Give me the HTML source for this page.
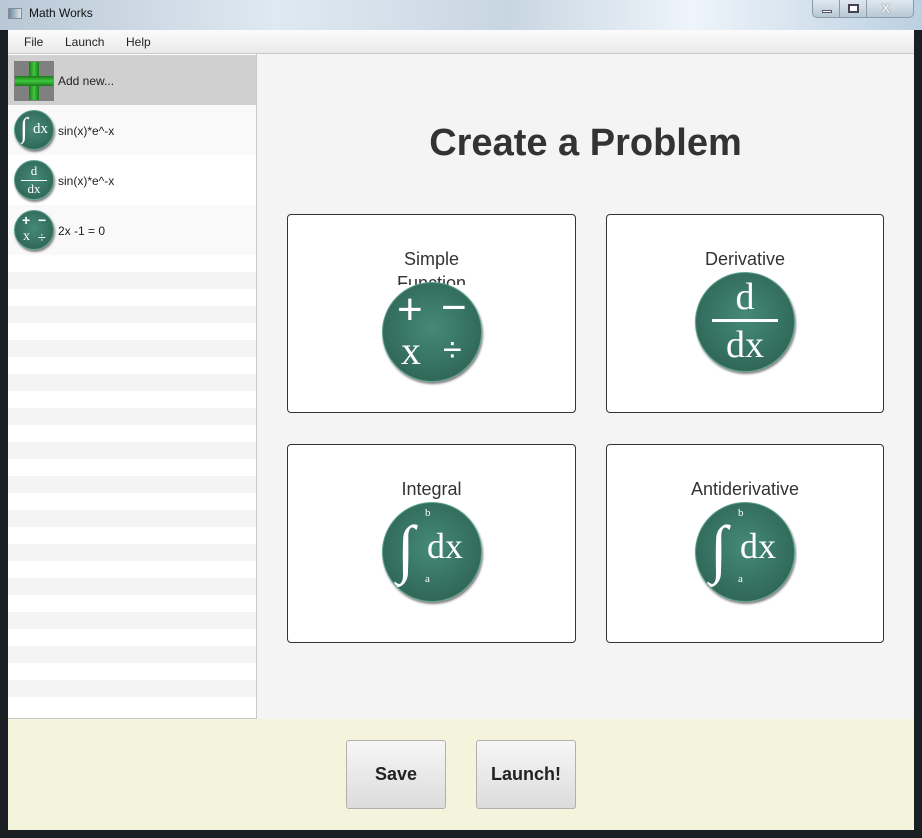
<!DOCTYPE html>
<html><head><meta charset="utf-8"><style>
*{margin:0;padding:0;box-sizing:border-box}
body{width:922px;height:838px;overflow:hidden;position:relative;background:#1a1f24;font-family:"Liberation Sans",sans-serif}
.abs{position:absolute}
#top{left:0;top:0;width:922px;height:30px;background:linear-gradient(90deg,#b9c8d6 0%,#dfe9f2 30%,#c8d6e2 55%,#eef4fa 75%,#bcd0e2 100%)}
#menu{left:8px;top:30px;width:906px;height:24px;background:linear-gradient(#fbfbfb,#e9e9e9);border-bottom:1px solid #c8c8c8;font-size:12px;color:#222}
#menu span{position:absolute;top:5px}
#list{left:8px;top:54px;width:249px;height:665px;background:#fff;border-right:1px solid #c8c8c8;border-bottom:1px solid #c8c8c8;overflow:hidden}
.row{position:absolute;left:0;width:248px;height:50px;font-size:12px;color:#222}
.row span{position:absolute;left:50px;top:19px}
.stripe{position:absolute;left:0;width:248px;height:17px;background:#f4f4f4}
#main{left:257px;top:54px;width:657px;height:665px;background:#f4f4f4}
#bot{left:8px;top:719px;width:906px;height:111px;background:#f4f4dc}
.card{position:absolute;background:#fff;border:1px solid #333;border-radius:4px}
.card .t{position:absolute;left:0;right:0;top:34px;text-align:center;font-size:18px;color:#333}
.c{position:absolute;border-radius:50%;background:radial-gradient(circle at 50% 45%,#458a76 0%,#346e5e 60%,#2a5a4c 100%);box-shadow:1px 2px 2px rgba(0,0,0,.5);border:1px solid #5aa08a;color:#fff;font-family:"Liberation Serif",serif;overflow:hidden}
.btn{position:absolute;top:740px;width:100px;height:69px;border:1px solid #b0b0b0;border-radius:3px;background:linear-gradient(#f6f6f6,#dcdcdc);font-weight:bold;font-size:18px;color:#222;text-align:center;line-height:67px}
</style></head><body>
<div class="abs" id="top"></div>
<div class="abs" style="left:8px;top:8px;width:14px;height:11px;background:linear-gradient(90deg,#6a8aa0,#e0e8ee);border:1px solid #889"></div>
<div class="abs" style="left:29px;top:6px;font-size:12px;color:#111">Math Works</div>
<div class="abs" style="left:812px;top:0;width:102px;height:18px;border:1px solid #8a9aa8;border-top:none;border-radius:0 0 5px 5px;background:linear-gradient(#dfe8f0,#b8c8d6)"></div>
<div class="abs" style="left:839px;top:0;width:1px;height:18px;background:#8a9aa8"></div>
<div class="abs" style="left:866px;top:0;width:1px;height:18px;background:#8a9aa8"></div>
<div class="abs" style="left:822px;top:10px;width:10px;height:3px;background:#fff;border:1px solid #556"></div>
<div class="abs" style="left:848px;top:4px;width:11px;height:9px;border:2px solid #445;background:#fff"></div>
<div class="abs" style="left:881px;top:0px;font-size:14px;font-weight:bold;color:#eee;text-shadow:0 0 1px #333">X</div>
<div class="abs" id="menu"><span style="left:16px">File</span><span style="left:57px">Launch</span><span style="left:118px">Help</span></div>
<div class="abs" id="list">
 <div class="row" style="top:1px;background:#d0d0d0"><div style="position:absolute;left:6px;top:6px;width:40px;height:40px;background:#808080"></div><div style="position:absolute;left:21px;top:7px;width:10px;height:38px;background:linear-gradient(90deg,#1a7a1a,#3ec83e,#1a7a1a)"></div><div style="position:absolute;left:7px;top:21px;width:38px;height:10px;background:linear-gradient(#1a7a1a,#3ec83e,#1a7a1a)"></div><span>Add new...</span></div>
 <div class="row" style="top:51px;background:#f9f9f9"><div class="c" style="left:6px;top:5px;width:40px;height:40px"><div style="position:absolute;left:5px;top:2px;font-size:28px">∫</div><div style="position:absolute;left:18px;top:10px;font-size:15px">dx</div></div><span>sin(x)*e^-x</span></div>
 <div class="row" style="top:101px;background:#fff"><div class="c" style="left:6px;top:5px;width:40px;height:40px"><div style="position:absolute;width:100%;text-align:center;top:2px;font-size:13px">d</div><div style="position:absolute;left:6px;right:6px;top:19px;height:1px;background:#fff"></div><div style="position:absolute;width:100%;text-align:center;top:20px;font-size:13px">dx</div></div><span>sin(x)*e^-x</span></div>
 <div class="row" style="top:151px;background:#f9f9f9"><div class="c" style="left:6px;top:5px;width:40px;height:40px;font-size:14px;font-family:'Liberation Sans',sans-serif"><div style="position:absolute;left:7px;top:1px;font-weight:bold">+</div><div style="position:absolute;left:23px;top:1px;font-weight:bold">−</div><div style="position:absolute;left:8px;top:18px;font-family:'Liberation Serif',serif">x</div><div style="position:absolute;left:23px;top:18px">÷</div></div><span>2x -1 = 0</span></div>
 <div class="stripe" style="top:218px"></div><div class="stripe" style="top:252px"></div><div class="stripe" style="top:286px"></div><div class="stripe" style="top:320px"></div><div class="stripe" style="top:354px"></div><div class="stripe" style="top:388px"></div><div class="stripe" style="top:422px"></div><div class="stripe" style="top:456px"></div><div class="stripe" style="top:490px"></div><div class="stripe" style="top:524px"></div><div class="stripe" style="top:558px"></div><div class="stripe" style="top:592px"></div><div class="stripe" style="top:626px"></div>
</div>
<div class="abs" id="main">
 <div style="position:absolute;left:0;right:0;top:68px;text-align:center;font-size:38px;font-weight:bold;color:#333;padding-left:0">Create a Problem</div>
 <div class="card" style="left:30px;top:160px;width:289px;height:199px"><div class="t">Simple</div><div class="t" style="top:58px;height:12px;overflow:hidden">Function</div>
  <div class="c" style="left:94px;top:67px;width:100px;height:100px;font-family:'Liberation Sans',sans-serif"><div style="position:absolute;left:14px;top:2px;font-size:44px">+</div><div style="position:absolute;left:58px;top:0px;font-size:44px">−</div><div style="position:absolute;left:18px;top:44px;font-size:40px;font-family:'Liberation Serif',serif">x</div><div style="position:absolute;left:60px;top:48px;font-size:34px">÷</div></div></div>
 <div class="card" style="left:349px;top:160px;width:278px;height:199px"><div class="t">Derivative</div>
  <div class="c" style="left:88px;top:57px;width:100px;height:100px"><div style="position:absolute;width:100%;text-align:center;top:2px;font-size:38px">d</div><div style="position:absolute;left:16px;right:16px;top:46px;height:3px;background:#fff"></div><div style="position:absolute;width:100%;text-align:center;top:50px;font-size:38px">dx</div></div></div>
 <div class="card" style="left:30px;top:390px;width:289px;height:199px"><div class="t">Integral</div>
  <div class="c" style="left:94px;top:57px;width:100px;height:100px"><div style="position:absolute;left:14px;top:6px;font-size:64px;line-height:80px">∫</div><div style="position:absolute;left:44px;top:22px;font-size:36px">dx</div><div style="position:absolute;left:42px;top:4px;font-size:11px">b</div><div style="position:absolute;left:42px;top:70px;font-size:11px">a</div></div></div>
 <div class="card" style="left:349px;top:390px;width:278px;height:199px"><div class="t">Antiderivative</div>
  <div class="c" style="left:88px;top:57px;width:100px;height:100px"><div style="position:absolute;left:14px;top:6px;font-size:64px;line-height:80px">∫</div><div style="position:absolute;left:44px;top:22px;font-size:36px">dx</div><div style="position:absolute;left:42px;top:4px;font-size:11px">b</div><div style="position:absolute;left:42px;top:70px;font-size:11px">a</div></div></div>
</div>
<div class="abs" id="bot"></div>
<div class="btn" style="left:346px">Save</div>
<div class="btn" style="left:476px">Launch!</div>
</body></html>
